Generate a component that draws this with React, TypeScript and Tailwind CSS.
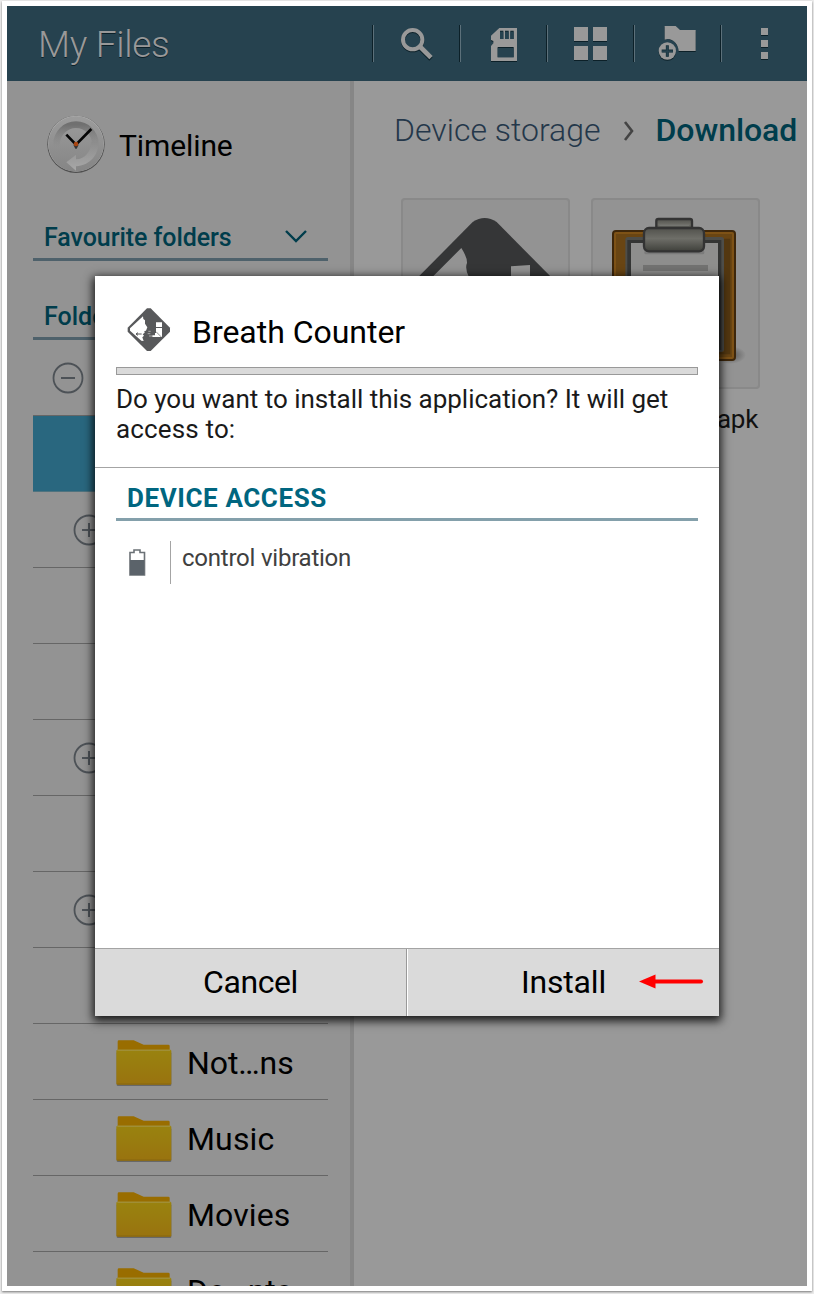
import type { ReactNode } from "react";

function SearchIcon() {
  return (
    <svg width="34" height="36" viewBox="120 78 102 108" fill="none">
      <g stroke="#0c2028" strokeWidth="12" transform="translate(0 3)">
        <circle cx="158" cy="119" r="29" />
        <path d="M178 139L213 174" strokeWidth="14" />
      </g>
      <g stroke="#999" strokeWidth="12">
        <circle cx="158" cy="119" r="29" />
        <path d="M178 138L213 173" strokeWidth="14" />
      </g>
    </svg>
  );
}

function CardShape() {
  return (
    <path
      fillRule="evenodd"
      d="M418 84H471V183H393V138L400 130V123L393 120V107ZM420 92V117H430V92ZM435 92V117H446V92ZM451 92V117H461V92ZM413 141V172H461V141Z"
    />
  );
}

function CardIcon() {
  return (
    <svg width="30" height="36" viewBox="387 78 90 108">
      <g fill="#0c2028" transform="translate(0 3)"><CardShape /></g>
      <g fill="#999"><CardShape /></g>
      <path fill="#26424f" d="M420 95H430V117H420ZM435 95H446V117H435ZM451 95H461V117H451ZM413 144H461V172H413Z" />
    </svg>
  );
}

function GridIcon() {
  return (
    <svg width="34" height="36" viewBox="642 78 102 108">
      <path fill="#0c2028" d="M642 84H684V126H642ZM699 84H741V126H699ZM642 141H684V183H642ZM699 141H741V183H699Z" />
      <path fill="#999" d="M642 81H684V123H642ZM699 81H741V123H699ZM642 138H684V180H642ZM699 138H741V180H699Z" />
    </svg>
  );
}

function AddFolderIcon() {
  return (
    <svg width="40" height="37" viewBox="892 75 120 111">
      <path fill="#0c2028" d="M912 81H945L958 94H1005V156H954V144L940 123L921 117L912 120Z" />
      <path fill="#999" d="M912 78H945L958 90H1005V153H954C953 132 938 118 921 117L912 119Z" />
      <circle cx="920" cy="156" r="26" fill="#0c2028" />
      <circle cx="920" cy="153" r="26" fill="#999" />
      <path d="M903 153H937M920 136V170" stroke="#16303b" strokeWidth="9" />
      <path d="M904 154H936M920 138V170" stroke="#26424f" strokeWidth="5" />
    </svg>
  );
}

function MoreIcon() {
  return (
    <svg width="9" height="36" viewBox="1200 78 27 108">
      <path fill="#0c2028" d="M1203 87H1224V108H1203ZM1203 123H1224V144H1203ZM1203 159H1224V180H1203Z" />
      <path fill="#999" d="M1203 84H1224V105H1203ZM1203 120H1224V141H1203ZM1203 156H1224V177H1203Z" />
    </svg>
  );
}

function ClockIcon() {
  return (
    <svg width="60" height="60" viewBox="138 342 180 180" className="shrink-0">
      <defs>
        <linearGradient id="dial" x1="0" y1="0" x2="0" y2="1">
          <stop offset="0" stopColor="#9c9c9c" />
          <stop offset="1" stopColor="#858585" />
        </linearGradient>
        <linearGradient id="ring" x1="0" y1="0" x2="0" y2="1">
          <stop offset="0" stopColor="#707070" />
          <stop offset=".6" stopColor="#878787" stopOpacity="0" />
        </linearGradient>
        <linearGradient id="sweep" x1="0" y1="0" x2="0" y2="1">
          <stop offset="0" stopColor="#8c8c8c" />
          <stop offset="1" stopColor="#a8a8a8" />
        </linearGradient>
      </defs>
      <circle cx="228" cy="433" r="86" fill="#4f4f4f" />
      <circle cx="228" cy="431" r="84" fill="#b0b0b0" />
      <circle cx="228" cy="432" r="83" fill="url(#dial)" />
      <circle cx="228" cy="432" r="58" fill="none" stroke="url(#ring)" strokeWidth="20" />
      <path d="M294 425C298 463 270 496 228 499V512L199 487L228 464V478C256 476 273 455 274 425Z" fill="url(#sweep)" />
      <path d="M199 404L228 434L274 387" stroke="#050505" strokeWidth="8" fill="none" />
      <path d="M220 434H236L230 446H226Z" fill="#333" />
      <circle cx="228" cy="432" r="7" fill="#a84410" />
    </svg>
  );
}

function FolderIcon() {
  return (
    <svg width="58" height="50" viewBox="346 112 174 150" className="shrink-0">
      <defs>
        <linearGradient id="folder" x1="0" y1="0" x2="0" y2="1">
          <stop offset="0" stopColor="#99830f" />
          <stop offset="1" stopColor="#99730f" />
        </linearGradient>
      </defs>
      <rect x="351" y="154" width="164" height="102" rx="4" fill="#686868" />
      <path d="M354 154V123Q354 119 358 119H402L432 132H506Q510 132 510 136V154Z" fill="#996d00" />
      <rect x="350" y="147" width="165" height="105" rx="4" fill="url(#folder)" />
      <path d="M353 148.5H512" stroke="#a4954b" strokeWidth="3" />
      <path d="M353 250H512" stroke="#876611" strokeWidth="3" />
    </svg>
  );
}

function ToggleIcon({ open = false }: { open?: boolean }) {
  return (
    <svg width="32" height="32" viewBox="0 0 32 32" fill="none" stroke="#4d5257" className="shrink-0">
      <circle cx="16" cy="16" r="14.500" strokeWidth="1.800" />
      <path d={open ? "M9 16H23" : "M9 16H23M16 9V23"} strokeWidth="2" />
    </svg>
  );
}

function LargeDiamond() {
  return (
    <svg width="169" height="191" viewBox="33 54 507 573">
      <path d="M248 126Q284 102 320 126L484 292L284 492L84 292Z" fill="#353637" />
      <path d="M128 290L214 204Q232 232 231 249Q224 265 237 292V330H128ZM363 259L420 255V320H363Z" fill="#939393" />
    </svg>
  );
}

function Clipboard() {
  return (
    <svg width="169" height="191" viewBox="603 54 507 573">
      <defs>
        <linearGradient id="clip" x1="0" y1="0" x2="0" y2="1">
          <stop offset="0" stopColor="#51514c" />
          <stop offset=".45" stopColor="#6e6e68" />
          <stop offset="1" stopColor="#3f403b" />
        </linearGradient>
        <radialGradient id="cast">
          <stop offset="0" stopColor="#555" />
          <stop offset="1" stopColor="#555" stopOpacity="0" />
        </radialGradient>
      </defs>
      <ellipse cx="1020" cy="525" rx="48" ry="27" fill="url(#cast)" />
      <rect x="669" y="153" width="366" height="387" rx="9" fill="#694513" stroke="#3e270b" strokeWidth="6" />
      <rect x="675" y="159" width="354" height="375" rx="4" fill="none" stroke="#7e5216" strokeWidth="6" />
      <path d="M1002 176H1021V523H985V515H1002Z" fill="#533710" />
      <rect x="706" y="171" width="296" height="345" rx="8" fill="#4d4d49" />
      <path d="M712 180H994V510H712Z" fill="#343534" />
      <path d="M723 189H984V505H723Z" fill="#8e8e8d" />
      <path d="M759 255H954V273H759Z" fill="#727271" />
      <rect x="763" y="211" width="180" height="12" rx="5" fill="#7b7b7b" />
      <path d="M799 155V123Q799 117 805 117H900Q906 117 906 123V155Z" fill="url(#clip)" stroke="#333" strokeWidth="7" />
      <path d="M808 136H897" stroke="#747570" strokeWidth="4" />
      <rect x="762" y="144" width="180" height="70" rx="15" fill="url(#clip)" stroke="#333" strokeWidth="7" />
    </svg>
  );
}

function AppIcon() {
  return (
    <svg width="44" height="44" viewBox="20 23 132 132" className="shrink-0">
      <path d="M80 24H91L149 82V94L91 152H80L22 94V82Z" fill="#58595b" />
      <path
        fill="#fff"
        d="M29 84L68 48L69 56L74 60V70L81 81L77 91L72 92L73 97L67 102L71 106L66 111L70 122L63 121L29 91ZM107 66H125V80H107ZM107 83H125V110H96V105H104V98H107Z"
      />
      <path d="M47 101H64M47 101L53 97M47 101L53 105" stroke="#58595b" strokeWidth="3" fill="none" />
      <path d="M107 94L123 110" stroke="#58595b" strokeWidth="2" />
      <path d="M84 93H91M82 100H90M86 107H95" stroke="#aaa" strokeWidth="3" />
    </svg>
  );
}

function Action({ children }: { children: ReactNode }) {
  return (
    <div className="flex h-full w-[87px] items-center">
      <div className="h-[37px] w-0.5 border-l border-l-[#0c2028] bg-[#5c707a]" />
      <div className="flex flex-1 justify-center">{children}</div>
    </div>
  );
}

function Row({ children, selected = false }: { children?: ReactNode; selected?: boolean }) {
  return (
    <div
      className={
        selected
          ? "flex h-[76px] shrink-0 items-center border-b border-[#4f737f] bg-[#29677f]"
          : "flex h-[76px] shrink-0 items-center border-b border-[#666]"
      }
    >
      {children}
    </div>
  );
}

function FolderRow({ name, spacing }: { name: string; spacing: string }) {
  return (
    <Row>
      <div className="flex items-center gap-[14px] pl-[82px] pt-0.5">
        <FolderIcon />
        <span className={`text-[32px] leading-9 text-black ${spacing}`}>{name}</span>
      </div>
    </Row>
  );
}

function Dialog() {
  return (
    <div className="absolute left-[88px] top-[270px] flex h-[740px] w-[624px] flex-col bg-white shadow-[0_3px_9px_2px_rgba(0,0,0,0.85)]">
      <div className="flex h-[91px] items-center pl-8 pt-4">
        <AppIcon />
        <h2 className="pl-[21px] pt-1 text-[32px] leading-9 tracking-[-0.03px] text-black">Breath Counter</h2>
      </div>
      <div className="mx-[21px] h-2 border border-[#999] bg-[#dadada]" />
      <p className="h-[92px] pl-[21px] pt-[9px] text-[26px] leading-[30px] tracking-[-0.03px] text-[#1a1a1a]">
        Do you want to install this application? It will get
        <br />
        <span className="tracking-[0.15px]">access to:</span>
      </p>
      <div className="flex flex-1 flex-col border-t border-[#a4a4a4]">
        <h3 className="mx-[21px] h-[53px] border-b-[3px] border-[#84a0ab] pl-[11px] pt-[15px] text-[26px] font-bold leading-[30px] tracking-[0.6px] text-[#006680]">
          DEVICE ACCESS
        </h3>
        <div className="flex pl-[33px] pt-5">
          <svg width="18" height="29" viewBox="0 0 18 29" className="mt-[7px]">
            <path d="M2 4.500H6V2H12V4.500H16.500V27H2Z" fill="none" stroke="#6b7176" strokeWidth="1.600" />
            <path d="M2 12H16V27H2Z" fill="#5b636a" />
          </svg>
          <div className="ml-6 h-[43px] w-px bg-[#a4a4a4]" />
          <span className="pl-[11px] pt-[3px] text-2xl leading-7 tracking-[-0.23px] text-[#404040]">control vibration</span>
        </div>
      </div>
      <div className="flex h-[68px] border-t border-[#a4a4a4] bg-[#dadada] text-[32px] leading-9 text-black">
        <button className="w-[312px] border-r border-[#999] pb-0.5 tracking-[-0.4px]">Cancel</button>
        <button className="relative flex-1 border-l border-white pb-0.5 tracking-[-0.2px]">
          Install
          <svg width="66" height="16" viewBox="0 0 66 16" className="absolute left-[231px] top-6">
            <path d="M12 8.500H62" stroke="#f00" strokeWidth="4" strokeLinecap="round" />
            <path d="M0 8.500L16.500 1.500V15.500Z" fill="#f00" />
          </svg>
        </button>
      </div>
    </div>
  );
}

export default function App() {
  return (
    <div className="h-[1294px] w-[814px] bg-[#ececec] pl-0.5 pt-px font-['Roboto',sans-serif]">
      <div className="h-[1290px] w-[810px] bg-white pl-[5px] pt-[5px] shadow-[0_1px_2px_#777]">
        <div className="relative flex h-[1280px] w-[800px] flex-col overflow-hidden">
          <header className="flex h-[75px] shrink-0 items-center bg-[#26424f]">
            <h1 className="flex-1 pl-[31px] pt-0.5 text-[37px] font-light leading-10 tracking-[-0.3px] text-[#999] [text-shadow:0_1px_0_#0c2028]">My Files</h1>
            <Action><SearchIcon /></Action>
            <Action><CardIcon /></Action>
            <Action><GridIcon /></Action>
            <Action><AddFolderIcon /></Action>
            <Action><MoreIcon /></Action>
          </header>
          <div className="flex min-h-0 flex-1">
            <aside className="flex w-[347px] shrink-0 flex-col overflow-hidden border-r-4 border-[#868686] bg-[#939393] pl-[26px] pr-[22px]">
              <div className="flex h-[126px] shrink-0 items-center gap-[13px] pl-[13px]">
                <ClockIcon />
                <span className="pt-1 text-[30px] leading-9 tracking-[-0.1px] text-black">Timeline</span>
              </div>
              <div className="flex h-[54px] shrink-0 items-center justify-between border-b-[3px] border-[#4e616b] pl-[11px] pr-5 pt-2.5 text-[25px] font-medium leading-7 text-[#003d4c]">
                <span className="tracking-[-0.06px]">Favourite folders</span>
                <svg width="24" height="16" viewBox="0 0 24 16" fill="none" stroke="#003d4c" strokeWidth="2.400" className="-mt-1">
                  <path d="M2 3L12 13L22 3" />
                </svg>
              </div>
              <div className="flex h-[79px] shrink-0 items-center border-b-[3px] border-[#4e616b] pl-[11px] pt-9 text-[25px] font-medium leading-7 text-[#003d4c]">
                Folders
              </div>
              <Row><div className="pl-[19px]"><ToggleIcon open /></div></Row>
              <Row selected />
              <Row><div className="pl-10"><ToggleIcon /></div></Row>
              <Row />
              <Row />
              <Row><div className="pl-10"><ToggleIcon /></div></Row>
              <Row />
              <Row><div className="pl-10"><ToggleIcon /></div></Row>
              <Row />
              <FolderRow name="Not…ns" spacing="tracking-[-0.1px]" />
              <FolderRow name="Music" spacing="tracking-[0.15px]" />
              <FolderRow name="Movies" spacing="tracking-[0.1px]" />
              <FolderRow name="Do…nts" spacing="tracking-normal" />
            </aside>
            <main className="flex-1 bg-[#999]">
              <div className="flex h-[117px] items-center pb-[19px] pl-10 text-[32px] leading-9 whitespace-nowrap">
                <span className="font-light text-[#24374a]">Device storage</span>
                <svg width="12" height="20" viewBox="0 0 12 20" fill="none" stroke="#444" strokeWidth="2.600" className="mb-0.5 ml-[22px] mr-[21px] mt-1 shrink-0">
                  <path d="M2 1L9 10L2 19" />
                </svg>
                <span className="font-medium tracking-[-0.05px] text-[#003d4c]">Download</span>
              </div>
              <div className="flex gap-[21px] pl-[47px]">
                <div className="h-[191px] w-[169px] rounded-sm bg-[#939393] shadow-[inset_0_0_0_2px_#898989]"><LargeDiamond /></div>
                <div className="h-[191px] w-[169px] rounded-sm bg-[#939393] shadow-[inset_0_0_0_2px_#898989]"><Clipboard /></div>
              </div>
              <div className="pl-[363px] pt-4 text-[26px] leading-7 tracking-[-0.3px] text-[#111]">apk</div>
            </main>
          </div>
          <Dialog />
        </div>
      </div>
    </div>
  );
}
